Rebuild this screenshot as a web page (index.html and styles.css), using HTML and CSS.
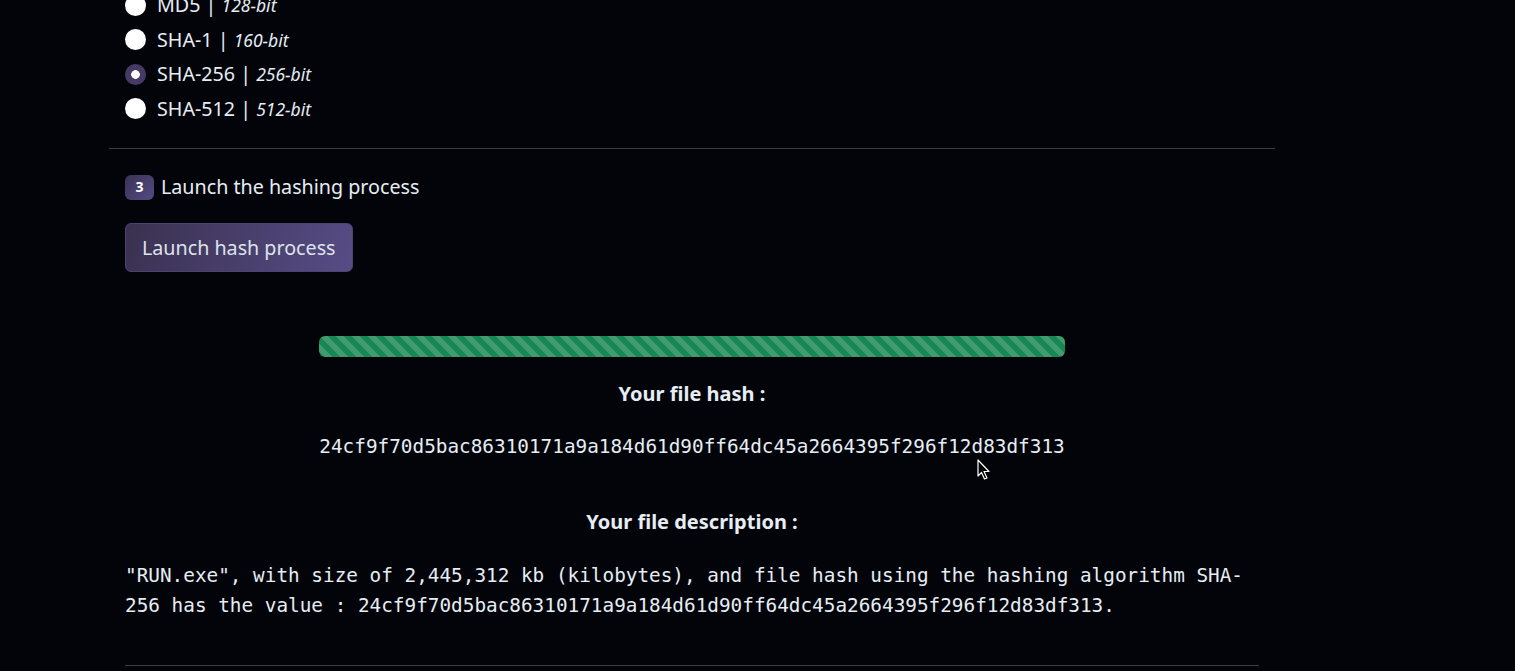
FILE: index.html
```html
<!DOCTYPE html>
<html lang="en">
<head>
<meta charset="utf-8">
<title>File hashing</title>
<link rel="stylesheet" href="styles.css">
</head>
<body>
<main class="page">
  <section class="algos">
    <label class="radio-row"><input class="radio" type="radio" name="algo"><span class="radio-text">MD5 | <em class="bits">128-bit</em></span></label>
    <label class="radio-row"><input class="radio" type="radio" name="algo"><span class="radio-text">SHA-1 | <em class="bits">160-bit</em></span></label>
    <label class="radio-row"><input class="radio" type="radio" name="algo" checked><span class="radio-text">SHA-256 | <em class="bits">256-bit</em></span></label>
    <label class="radio-row"><input class="radio" type="radio" name="algo"><span class="radio-text">SHA-512 | <em class="bits">512-bit</em></span></label>
  </section>
  <hr class="sep-wide">
  <section class="step">
    <div class="step-title"><span class="badge">3</span><span>Launch the hashing process</span></div>
    <button class="btn-launch" type="button">Launch hash process</button>
  </section>
  <section class="result">
    <div class="hash-block">
      <div class="progress"><div class="progress-bar"></div></div>
      <h5 class="result-title">Your file hash :</h5>
      <code class="hash">24cf9f70d5bac86310171a9a184d61d90ff64dc45a2664395f296f12d83df313</code>
    </div>
    <h5 class="result-title desc-title">Your file description :</h5>
    <p class="desc">"RUN.exe", with size of 2,445,312 kb (kilobytes), and file hash using the hashing algorithm SHA-256 has the value : 24cf9f70d5bac86310171a9a184d61d90ff64dc45a2664395f296f12d83df313.</p>
    <hr class="sep-inner">
  </section>
</main>
<svg class="cursor" width="14" height="22" viewBox="0 0 14 22" aria-hidden="true">
  <path d="M1 1 L1 17 L4.5 13.5 L7.5 20 L10 19 L7 12.5 L12 12.5 Z" fill="#000" stroke="#fff" stroke-width="1.2" stroke-linejoin="round"/>
</svg>
</body>
</html>
```
FILE: styles.css
```css
html, body {
  margin: 0;
  padding: 0;
  background: #02040a;
  color: #e6edf3;
  font-family: "Noto Sans", "Open Sans", sans-serif;
  font-size: 19.7px;
  overflow: hidden;
  height: 671px;
}

.page {
  width: 1166px;
  margin-left: 109px;
}

.algos {
  display: flex;
  flex-direction: column;
  margin-top: -12px;
  padding: 0 16px;
}

.radio-row {
  display: flex;
  align-items: center;
  height: 34.5px;
  gap: 11px;
  line-height: 30px;
}

.radio {
  appearance: none;
  -webkit-appearance: none;
  margin: 0;
  width: 21px;
  height: 21px;
  border-radius: 50%;
  background: #ffffff;
  flex: none;
}

.radio:checked {
  background: radial-gradient(circle, #ffffff 0 4px, #463a64 4.6px);
}

.radio-text {
  white-space: nowrap;
}

.bits {
  font-size: 17.5px;
}

.sep-wide {
  margin: 22px 0 0;
  border: 0;
  border-top: 1px solid #3b3e44;
}

.step {
  padding: 0 16px;
  display: flex;
  flex-direction: column;
  align-items: flex-start;
}

.step-title {
  display: flex;
  align-items: center;
  gap: 7px;
  margin-top: 23px;
  line-height: 30px;
}

.badge {
  display: inline-flex;
  align-items: center;
  justify-content: center;
  width: 29px;
  height: 25px;
  border-radius: 6px;
  background: linear-gradient(135deg, #3b3256, #544a82);
  color: #ffffff;
  font-weight: 700;
  font-size: 14px;
}

.btn-launch {
  margin-top: 21px;
  height: 49px;
  padding: 0 16px;
  border: 1px solid #4c4370;
  border-radius: 6px;
  background: linear-gradient(110deg, #3a3150, #574c86);
  color: #dde3ea;
  font-family: inherit;
  font-size: 19.7px;
}

.result {
  padding: 0 16px;
  display: flex;
  flex-direction: column;
}

.hash-block {
  align-self: center;
  display: flex;
  flex-direction: column;
  align-items: center;
  margin-top: 64px;
}

.progress {
  width: 100%;
  height: 21px;
  border-radius: 6px;
  overflow: hidden;
  background: #2b2f36;
}

.progress-bar {
  width: 100%;
  height: 100%;
  background-color: #198754;
  background-image: linear-gradient(45deg, rgba(255,255,255,.17) 25%, transparent 25%, transparent 50%, rgba(255,255,255,.17) 50%, rgba(255,255,255,.17) 75%, transparent 75%, transparent);
  background-size: 16px 16px;
}

.result-title {
  margin: 22px 0 0;
  font-size: 20px;
  font-weight: 700;
  line-height: 30px;
  text-align: center;
}

.hash {
  margin-top: 23px;
  font-family: "DejaVu Sans Mono", "Liberation Mono", monospace;
  font-size: 19.35px;
  line-height: 30px;
  color: #e6edf3;
}

.desc-title {
  margin-top: 45px;
}

.desc {
  margin: 24px 0 0;
  font-family: "DejaVu Sans Mono", "Liberation Mono", monospace;
  font-size: 19.35px;
  line-height: 30px;
}

.sep-inner {
  margin: 44px 0 0;
  border: 0;
  border-top: 1px solid #3b3e44;
}

.cursor {
  position: absolute;
  left: 977px;
  top: 459px;
}
```
